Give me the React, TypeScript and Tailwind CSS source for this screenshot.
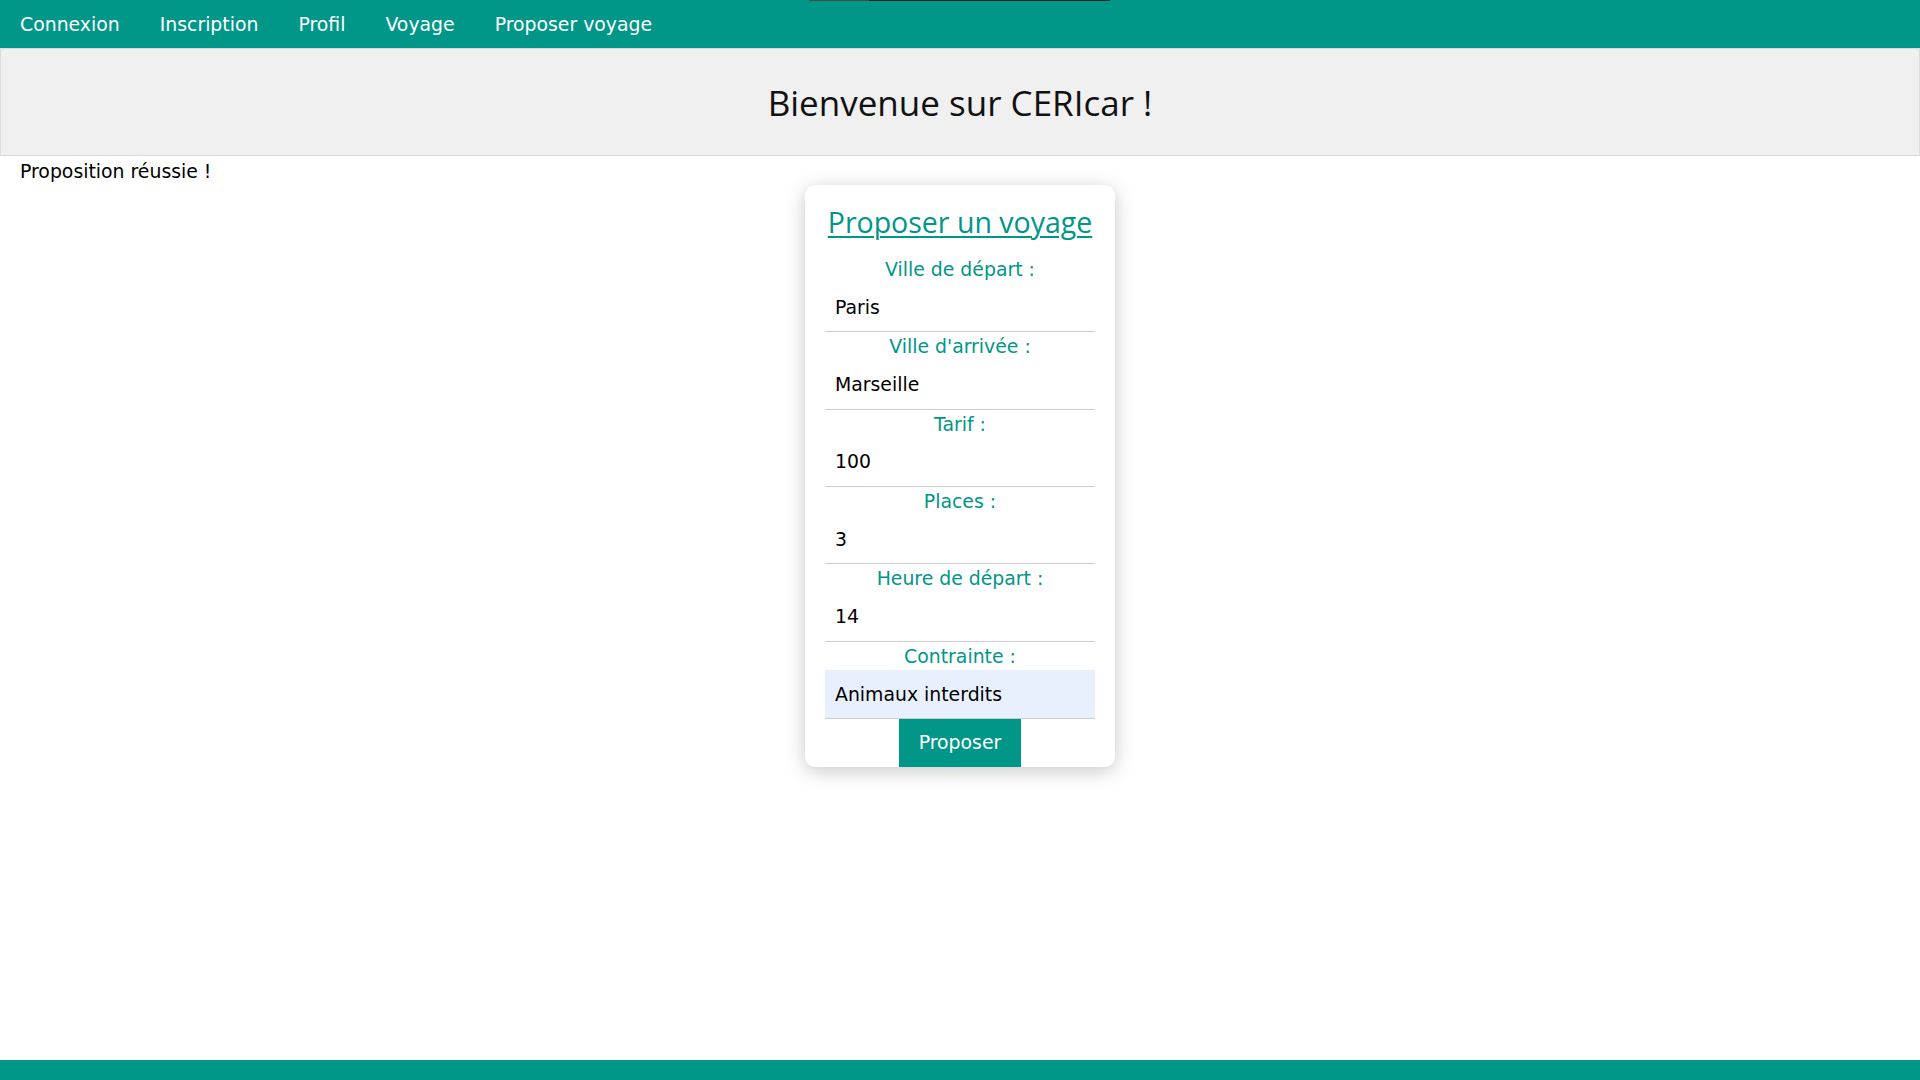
import React from "react";

const fields: { label: string; value: string; auto?: boolean }[] = [
  { label: "Ville de départ :", value: "Paris" },
  { label: "Ville d'arrivée :", value: "Marseille" },
  { label: "Tarif :", value: "100" },
  { label: "Places :", value: "3" },
  { label: "Heure de départ :", value: "14" },
  { label: "Contrainte :", value: "Animaux interdits", auto: true },
];

export default function App() {
  return (
    <div className="relative min-h-screen flex flex-col bg-white text-black font-['DejaVu_Sans',sans-serif] text-[18.85px]">
      <div className="absolute top-0 left-[809px] w-[60px] h-px bg-[#4a4a4a]" />
      <div className="absolute top-0 left-[869px] w-[241px] h-px bg-[#222222]" />

      <nav className="h-12 bg-[#009688] flex items-center">
        {["Connexion", "Inscription", "Profil", "Voyage", "Proposer voyage"].map((n) => (
          <a key={n} className="px-5 pt-[2px] text-white leading-[46px] cursor-pointer">
            {n}
          </a>
        ))}
      </nav>

      <header className="h-[108px] bg-[#f0f0f0] border border-[#dcdcdc] flex items-center justify-center">
        <h1 className="font-['Open_Sans',sans-serif] text-[35px] leading-none text-[#111]">
          Bienvenue sur CERIcar !
        </h1>
      </header>

      <p className="pl-5 pt-[4px] leading-6">Proposition réussie !</p>

      <div className="mt-[1px] self-center w-[310px] bg-white rounded-[10px] shadow-[0_4px_20px_rgba(0,0,0,0.22)] px-5 flex flex-col">
        <h2 className="mt-5 mb-[15.8px] h-[34px] leading-[34px] text-center font-['Open_Sans',sans-serif] text-[28.5px] text-[#009688] underline decoration-2 underline-offset-[3px]">
          Proposer un voyage
        </h2>
        {fields.map((f) => (
          <div key={f.label} className="flex flex-col">
            <label className="h-[28.6px] leading-[30px] text-center text-[#009688]">{f.label}</label>
            <div
              className={`h-[48.8px] border-b border-[#cccccc] pl-[10px] pt-[1px] flex items-center ${
                f.auto ? "bg-[#e8f0fe]" : "bg-white"
              }`}
            >
              {f.value}
            </div>
          </div>
        ))}
        <button className="self-center h-12 px-5 bg-[#009688] text-white">Proposer</button>
      </div>

      <footer className="mt-auto h-5 bg-[#009688]" />
    </div>
  );
}
